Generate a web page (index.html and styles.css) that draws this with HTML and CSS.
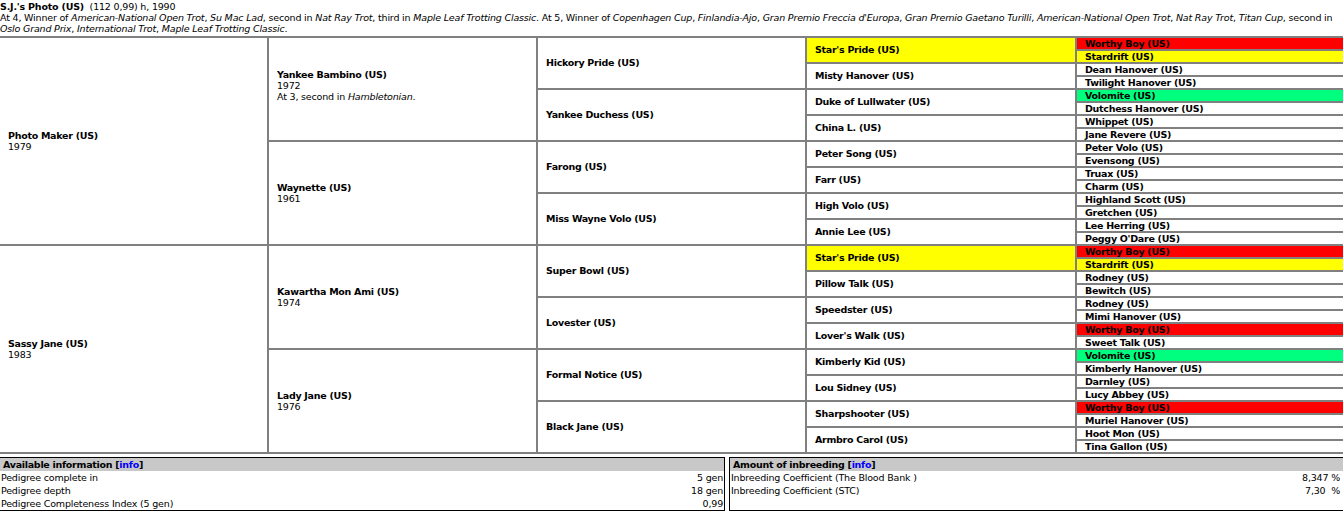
FILE: index.html
```html
<!DOCTYPE html>
<html lang="en">
<head>
<meta charset="utf-8">
<title>S.J.'s Photo (US)</title>
<link rel="stylesheet" href="styles.css">
</head>
<body>
<header class="intro">
<div><b class="title">S.J.'s Photo (US)</b>&nbsp;&nbsp;(112 0,99) h, 1990</div>
<div>At 4, Winner of <i>American-National Open Trot</i>, <i>Su Mac Lad</i>, second in <i>Nat Ray Trot</i>, third in <i>Maple Leaf Trotting Classic</i>. At 5, Winner of <i>Copenhagen Cup</i>, <i>Finlandia-Ajo</i>, <i>Gran Premio Freccia d'Europa</i>, <i>Gran Premio Gaetano Turilli</i>, <i>American-National Open Trot</i>, <i>Nat Ray Trot</i>, <i>Titan Cup</i>, second in <i>Oslo Grand Prix</i>, <i>International Trot</i>, <i>Maple Leaf Trotting Classic</i>.</div>
</header>
<table class="pedigree">
<colgroup><col class="c1"><col class="c2"><col class="c3"><col class="c4"><col class="c5"></colgroup>
<tbody>
<tr><td rowspan="16" class="first"><b>Photo Maker (US)</b><br>1979</td><td rowspan="8" class="tall"><b>Yankee Bambino (US)</b><br>1972<br>At 3, second in <i>Hambletonian</i>.<br>&nbsp;</td><td rowspan="4"><b>Hickory Pride (US)</b></td><td rowspan="2" class="yellow"><b>Star's Pride (US)</b></td><td class="red"><b>Worthy Boy (US)</b></td></tr>
<tr><td class="yellow"><b>Stardrift (US)</b></td></tr>
<tr><td rowspan="2"><b>Misty Hanover (US)</b></td><td><b>Dean Hanover (US)</b></td></tr>
<tr><td><b>Twilight Hanover (US)</b></td></tr>
<tr><td rowspan="4"><b>Yankee Duchess (US)</b></td><td rowspan="2"><b>Duke of Lullwater (US)</b></td><td class="green"><b>Volomite (US)</b></td></tr>
<tr><td><b>Dutchess Hanover (US)</b></td></tr>
<tr><td rowspan="2"><b>China L. (US)</b></td><td><b>Whippet (US)</b></td></tr>
<tr><td><b>Jane Revere (US)</b></td></tr>
<tr><td rowspan="8"><b>Waynette (US)</b><br>1961</td><td rowspan="4"><b>Farong (US)</b></td><td rowspan="2"><b>Peter Song (US)</b></td><td><b>Peter Volo (US)</b></td></tr>
<tr><td><b>Evensong (US)</b></td></tr>
<tr><td rowspan="2"><b>Farr (US)</b></td><td><b>Truax (US)</b></td></tr>
<tr><td><b>Charm (US)</b></td></tr>
<tr><td rowspan="4"><b>Miss Wayne Volo (US)</b></td><td rowspan="2"><b>High Volo (US)</b></td><td><b>Highland Scott (US)</b></td></tr>
<tr><td><b>Gretchen (US)</b></td></tr>
<tr><td rowspan="2"><b>Annie Lee (US)</b></td><td><b>Lee Herring (US)</b></td></tr>
<tr><td><b>Peggy O'Dare (US)</b></td></tr>
<tr><td rowspan="16" class="first"><b>Sassy Jane (US)</b><br>1983</td><td rowspan="8"><b>Kawartha Mon Ami (US)</b><br>1974</td><td rowspan="4"><b>Super Bowl (US)</b></td><td rowspan="2" class="yellow"><b>Star's Pride (US)</b></td><td class="red"><b>Worthy Boy (US)</b></td></tr>
<tr><td class="yellow"><b>Stardrift (US)</b></td></tr>
<tr><td rowspan="2"><b>Pillow Talk (US)</b></td><td><b>Rodney (US)</b></td></tr>
<tr><td><b>Bewitch (US)</b></td></tr>
<tr><td rowspan="4"><b>Lovester (US)</b></td><td rowspan="2"><b>Speedster (US)</b></td><td><b>Rodney (US)</b></td></tr>
<tr><td><b>Mimi Hanover (US)</b></td></tr>
<tr><td rowspan="2"><b>Lover's Walk (US)</b></td><td class="red"><b>Worthy Boy (US)</b></td></tr>
<tr><td><b>Sweet Talk (US)</b></td></tr>
<tr><td rowspan="8"><b>Lady Jane (US)</b><br>1976</td><td rowspan="4"><b>Formal Notice (US)</b></td><td rowspan="2"><b>Kimberly Kid (US)</b></td><td class="green"><b>Volomite (US)</b></td></tr>
<tr><td><b>Kimberly Hanover (US)</b></td></tr>
<tr><td rowspan="2"><b>Lou Sidney (US)</b></td><td><b>Darnley (US)</b></td></tr>
<tr><td><b>Lucy Abbey (US)</b></td></tr>
<tr><td rowspan="4"><b>Black Jane (US)</b></td><td rowspan="2"><b>Sharpshooter (US)</b></td><td class="red"><b>Worthy Boy (US)</b></td></tr>
<tr><td><b>Muriel Hanover (US)</b></td></tr>
<tr><td rowspan="2"><b>Armbro Carol (US)</b></td><td><b>Hoot Mon (US)</b></td></tr>
<tr><td><b>Tina Gallon (US)</b></td></tr>
</tbody>
</table>
<section class="stats">
<div class="box box-left">
<h2 class="box-head">Available information [<a href="#">info</a>]</h2>
<div class="row"><span>Pedigree complete in</span><span>5 gen</span></div>
<div class="row"><span>Pedigree depth</span><span>18 gen</span></div>
<div class="row"><span>Pedigree Completeness Index (5 gen)</span><span>0,99</span></div>
</div>
<div class="box box-right">
<h2 class="box-head">Amount of inbreeding [<a href="#">info</a>]</h2>
<div class="row"><span>Inbreeding Coefficient (The Blood Bank )</span><span>8,347 %</span></div>
<div class="row"><span>Inbreeding Coefficient (STC)</span><span>7,30 &nbsp;%</span></div>
<div class="row"></div>
</div>
</section>
</body>
</html>
```
FILE: styles.css
```css
html, body {
  margin: 0;
  padding: 0;
  background: #fff;
  color: #000;
  font-family: "DejaVu Sans", Verdana, sans-serif;
  font-size: 9.5px;
  letter-spacing: -0.18px;
  line-height: 11px;
  overflow: hidden;
}
b, .box-head { letter-spacing: -0.28px; }
.intro {
  height: 36px;
  padding-top: 1px;
  box-sizing: border-box;
}
.intro .title { letter-spacing: -0.2px; }
.pedigree {
  width: 1343px;
  table-layout: fixed;
  border-collapse: separate;
  border-spacing: 0;
  border-top: 2px solid #808080;
}
.c1 { width: 267px; }
.c2 { width: 269px; }
.c3 { width: 269px; }
.c4 { width: 270px; }
.c5 { width: 268px; }
.pedigree tr { height: 13px; }
.pedigree td {
  padding: 0 0 0 8px;
  border-left: 2px solid #808080;
  border-bottom: 2px solid #808080;
  line-height: 11px;
  white-space: nowrap;
  overflow: hidden;
}
.pedigree td[rowspan="2"],
.pedigree td[rowspan="4"] { padding-bottom: 2px; }
.pedigree td.tall { padding-top: 4px; }
.pedigree td.first { border-left: 0; }
.pedigree td.yellow { background: #ffff00; }
.pedigree td.red { background: #ff0000; }
.pedigree td.green { background: #00ff7f; }
.stats {
  display: flex;
  gap: 4px;
  margin-top: 3px;
}
.box {
  border: 1px solid #000;
  height: 54px;
  box-sizing: border-box;
}
.box-left { width: 725px; border-left: 0; }
.box-right { flex: 1; border-right: 0; }
.box-right .row { padding-right: 3px; }
.box-head {
  margin: 0;
  padding: 1px 0 1px 3px;
  height: 13px;
  box-sizing: border-box;
  background: #c8c8c8;
  font-size: 9.5px;
  line-height: 11px;
}
.box-head a { color: #0000ff; text-decoration: none; }
.row {
  display: flex;
  justify-content: space-between;
  height: 13px;
  padding: 1px;
  box-sizing: border-box;
  line-height: 11px;
}
```
